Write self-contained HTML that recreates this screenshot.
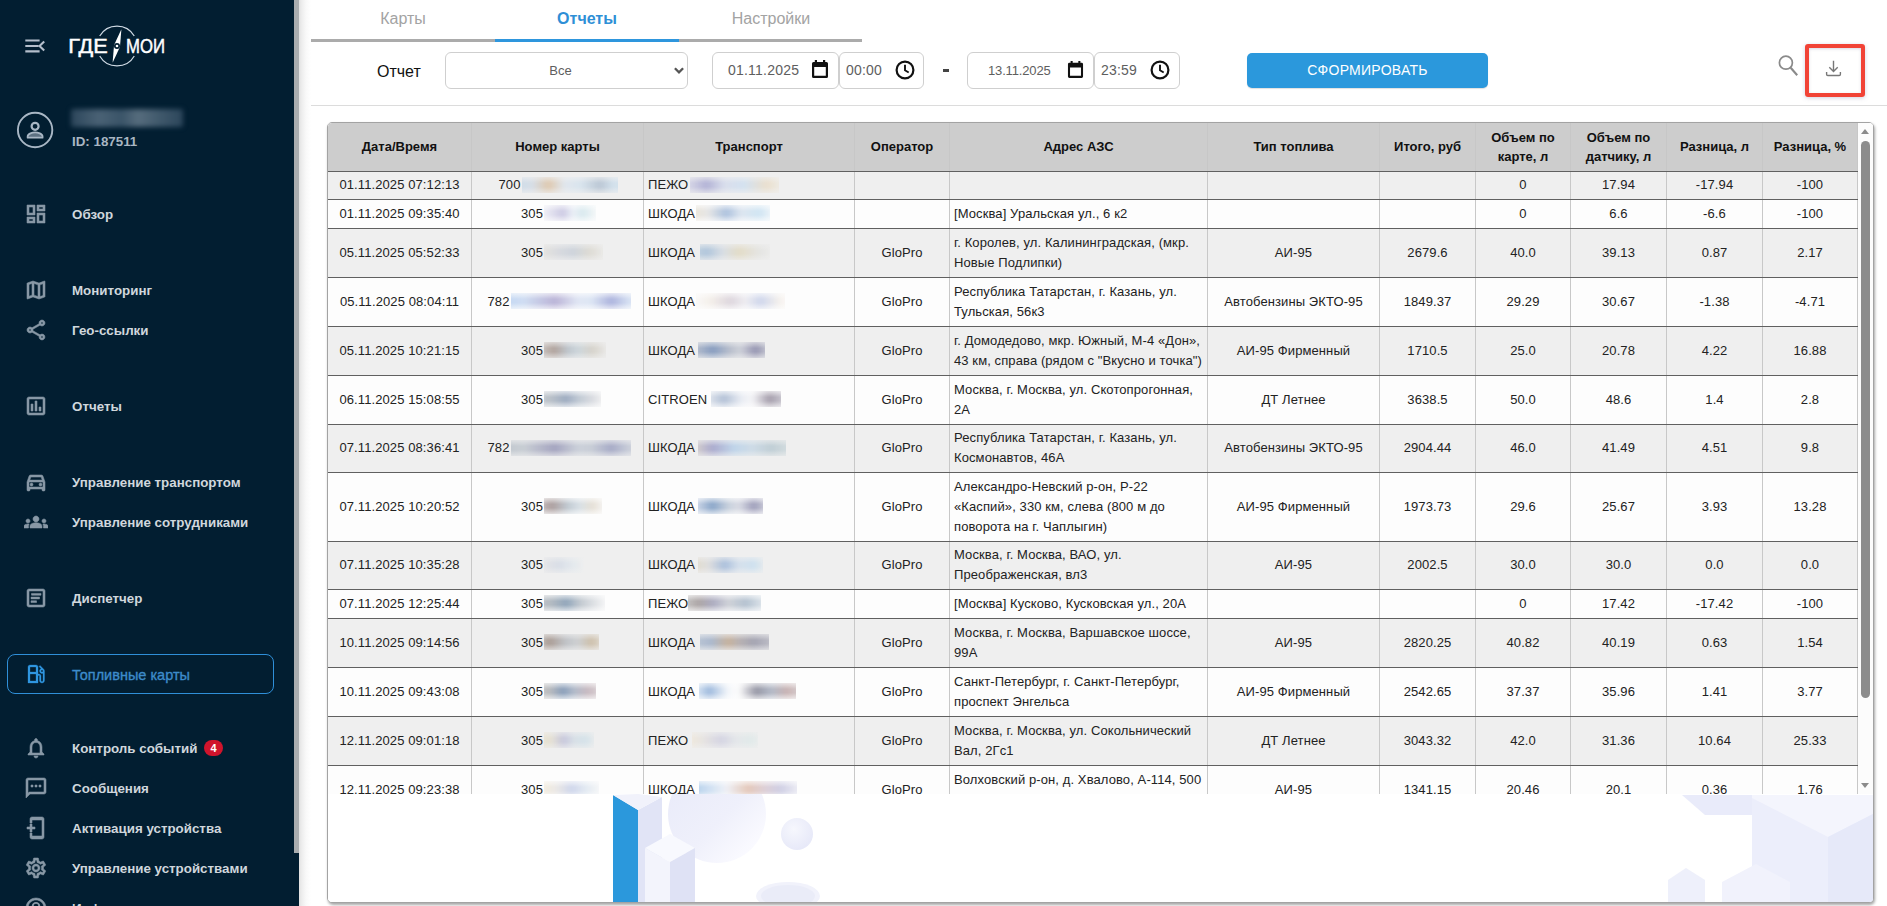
<!DOCTYPE html>
<html lang="ru"><head><meta charset="utf-8"><title>ГдеМои — Топливные карты — Отчеты</title>
<style>
*{box-sizing:border-box}
html,body{margin:0;padding:0}
body{width:1887px;height:906px;overflow:hidden;background:#fff;font-family:"Liberation Sans",sans-serif;position:relative}
/* ---------- sidebar ---------- */
.side{position:absolute;left:0;top:0;width:299px;height:906px;background:#021e31;overflow:hidden;z-index:5}
.sidescroll{position:absolute;left:294px;top:0;width:5px;height:853px;background:#aaadaf}
.sideshadow{position:absolute;left:299px;top:0;width:12px;height:906px;background:linear-gradient(90deg,#e2e2e2 0,#efefef 28%,#f9f9f9 60%,#fff 100%);z-index:1}
.side svg{position:absolute;display:block}
.ni{position:absolute;left:0;width:294px;height:40px}
.ni svg{left:24px;top:8px;width:24px;height:24px;fill:#8898a6;stroke:#8898a6;stroke-width:.55;stroke-linejoin:round}
.ni span{position:absolute;left:72px;top:.5px;line-height:40px;font-size:13.35px;font-weight:bold;color:#d0d7dd;white-space:nowrap;transform-origin:0 50%}
.ni.sel{left:7px;width:267px;height:40px;border:1px solid #2f8fd8;border-radius:8px}
.ni.sel svg{left:16px;top:7px;fill:#2f96e0;stroke:#2f96e0;stroke-width:.3}
.ni.sel span{left:64px;top:-.5px;color:#3d8bca;font-weight:normal;font-size:14.5px;-webkit-text-stroke:.35px #3d8bca}
.badge{position:absolute;left:204px;top:11.500px;width:19px;height:16px;border-radius:8px;background:#d0142c;color:#fff;font-size:11px;font-weight:bold;line-height:16px;text-align:center}
.uid{position:absolute;left:72px;top:134px;font-size:13.35px;font-weight:bold;color:#a9b6c2;line-height:16px;white-space:nowrap}
.uname{position:absolute;left:71px;top:109px;width:112px;height:18px;background:linear-gradient(90deg,#2c465b,#4a6275 25%,#3a5468 45%,#566c7d 60%,#3f586b 80%,#2c465b);filter:blur(2.5px);border-radius:2px}
/* ---------- main ---------- */
.main{position:absolute;left:299px;top:0;width:1588px;height:906px}
.tab{position:absolute;top:0;height:39px;width:184px;text-align:center;font-size:16px;line-height:37px;color:#a3a3a3}
.tab.act{color:#2e8fd6;font-weight:bold}
.tabline{position:absolute;left:12px;top:39px;width:551px;height:3px;background:#ababab}
.tabline i{position:absolute;left:184px;top:0;width:184px;height:3px;background:#2e96dd}
.lbl{position:absolute;left:78px;top:62px;font-size:16px;line-height:20px;color:#111}
.inp{position:absolute;top:52px;height:37px;border:1px solid #cfcfcf;border-radius:6px;background:#fff;color:#5e5e5e;font-size:14px;line-height:35px;white-space:nowrap;letter-spacing:.21px}
.inp svg{position:absolute;display:block}
.dash{position:absolute;left:644px;top:69px;width:6px;height:3px;background:#444}
.btn{position:absolute;left:948px;top:53px;width:241px;height:35px;border-radius:5px;background:#2b98dc;color:#fff;font-size:14px;line-height:35px;text-align:center;letter-spacing:.27px;box-shadow:0 1px 1px rgba(0,0,0,.13)}
.hr{position:absolute;left:12px;top:105px;width:1576px;height:1px;background:#dcdcdc}
.redbox{position:absolute;left:1506px;top:44px;width:60px;height:53px;border:4px solid #f14336;border-radius:3px;box-shadow:0 1px 4px rgba(120,120,160,.35),inset 0 1px 3px rgba(120,120,160,.3)}
.main>svg{position:absolute;display:block}
/* ---------- card & table ---------- */
.card{position:absolute;left:28px;top:122px;width:1547px;height:781px;border:1px solid #a3a3a3;border-radius:5px;background:#fff;box-shadow:1px 2px 3px rgba(0,0,0,.35);overflow:hidden}
.scroll{position:absolute;left:0;top:0;width:1545px;height:671px;overflow:hidden;background:#fff}
table.rep{border-collapse:separate;border-spacing:0;table-layout:fixed;width:1530px;font-size:13px;color:#222}
table.rep th{height:49px;background:#cdcdcd;color:#111;font-weight:bold;font-size:13px;line-height:19px;padding:0 7px 2px 6px;text-align:center;box-shadow:inset -1px 0 0 #c7c7c7;border-bottom:1px solid #606060;vertical-align:middle}
table.rep th.t2{padding-bottom:0}
table.rep td{padding:3px 5px 4px 4px;letter-spacing:.1px;line-height:20px;text-align:center;vertical-align:middle;box-shadow:inset -1px 0 0 #c8c8c8;border-bottom:1px solid #606060;white-space:nowrap;overflow:hidden}
table.rep td.l{text-align:left;padding-left:4px}
table.rep td.a{white-space:normal}
tr.o td{background:#efefef;--bg:239,239,239}
tr.e td{background:#fdfdfd;--bg:253,253,253}
.bl{display:inline-block;vertical-align:middle;position:relative;height:16px;top:-1px}
.bl b{position:absolute;top:0;display:block;overflow:hidden;border-radius:1px}
.bl b::after{content:"";position:absolute;left:0;top:0;right:0;bottom:0;background:linear-gradient(180deg,rgba(var(--bg),.6),rgba(var(--bg),0) 38%,rgba(var(--bg),0) 62%,rgba(var(--bg),.6))}
.bl i{display:block;width:100%;height:100%;filter:blur(2.5px);transform:scale(1.12,1.6);opacity:.86}
.sb{position:absolute;left:1530px;top:0;width:15px;height:671px;background:#fcfcfc}
.sbthumb{position:absolute;left:3px;top:18px;width:9px;height:557px;background:#8c8c8c;border-radius:5px}
.sbup{position:absolute;left:3px;top:6px;width:0;height:0;border:4.5px solid transparent;border-bottom:5px solid #8b8b8b;border-top:0}
.sbdn{position:absolute;left:3px;top:660px;width:0;height:0;border:4.5px solid transparent;border-top:5px solid #8b8b8b;border-bottom:0}
.deco{position:absolute;left:0;top:671px;width:1545px;height:108px;overflow:hidden;background:#fff}
.deco svg{position:absolute;left:0;top:0;display:block}

</style></head>
<body>
<div class="sideshadow"></div>
<div class="side">
<!-- menu toggle -->
<svg style="left:23px;top:34px;width:24px;height:24px" viewBox="0 0 24 24" fill="#b4becb"><path d="M2.300 5.500h14.300v2.100H2.300zM2.300 11h13.300v2.100H2.300zM2.300 16.300h14.300v2.100H2.300z"/><path d="M21.200 7.400 16.500 12l4.700 4.600" fill="none" stroke="#b4becb" stroke-width="2.100"/></svg>
<!-- logo -->
<svg style="left:62px;top:22px;width:110px;height:48px" viewBox="62 22 110 48">
<g fill="none" stroke="#cfd9e3" stroke-width="1.200">
<path d="M99.700 36A20 20 0 0 1 134.300 36"/><path d="M99.700 56A20 20 0 0 0 134.300 56"/>
</g>
<path d="M121.400 29.300 114.200 44.700 119.900 47.600z" fill="#fff"/><path d="M112.600 62.700 119.800 47.300 114.100 44.400z" fill="#fff"/>
<circle cx="117" cy="46" r="3" fill="#021e31"/><circle cx="117" cy="46" r="1.300" fill="#fff"/>
<text x="68.200" y="53.300" font-family="Liberation Sans, sans-serif" font-size="19.500" fill="#fff" stroke="#fff" stroke-width=".45" textLength="39.500" lengthAdjust="spacingAndGlyphs">ГДЕ</text>
<text x="126" y="53.300" font-family="Liberation Sans, sans-serif" font-size="19.500" fill="#fff" stroke="#fff" stroke-width=".45" textLength="39" lengthAdjust="spacingAndGlyphs">МОИ</text>
</svg>
<!-- user -->
<svg style="left:15px;top:110px;width:40px;height:40px" viewBox="15 110 40 40"><circle cx="35.100" cy="130" r="17.200" fill="none" stroke="#a9b7c5" stroke-width="1.900"/><circle cx="35.100" cy="126.300" r="3.500" fill="none" stroke="#a9b7c5" stroke-width="2.200"/><path d="M27.600 137.700v-1.100c0-2.900 5-4.300 7.500-4.300s7.500 1.400 7.500 4.300v1.100z" fill="#a9b7c5" fill-opacity=".55" stroke="#a9b7c5" stroke-width="1.700" stroke-linejoin="round"/></svg>
<div class="uname"></div>
<div class="uid">ID: 187511</div>

<div class="ni" style="top:194px"><svg viewBox="0 0 24 24"><path d="M19 5v2h-4V5h4M9 5v6H5V5h4m10 8v6h-4v-6h4M9 17v2H5v-2h4M21 3h-8v6h8V3zM11 3H3v10h8V3zm10 8h-8v10h8V11zm-10 4H3v6h8v-6z"/></svg><span>Обзор</span></div>
<div class="ni" style="top:270px"><svg viewBox="0 0 24 24"><path d="M20.500 3l-.16.03L15 5.100 9 3 3.360 4.900c-.21.07-.36.250-.36.480V20.500c0 .28.220.5.500.5l.16-.03L9 18.900l6 2.100 5.640-1.900c.21-.07.36-.25.36-.48V3.500c0-.28-.22-.5-.5-.5zM10 5.470l4 1.400v11.660l-4-1.400V5.470zm-5 .99l3-1.010v11.700l-3 1.160V6.460zm14 11.080l-3 1.010V6.860l3-1.160v11.840z"/></svg><span>Мониторинг</span></div>
<div class="ni" style="top:310px"><svg viewBox="0 0 24 24"><path d="M18 16.080c-.76 0-1.440.3-1.960.77L8.910 12.700c.05-.23.09-.46.09-.7s-.04-.47-.09-.7l7.050-4.110c.54.5 1.250.81 2.040.81 1.660 0 3-1.340 3-3s-1.340-3-3-3-3 1.340-3 3c0 .24.04.47.09.7L8.040 9.810C7.500 9.310 6.790 9 6 9c-1.660 0-3 1.340-3 3s1.340 3 3 3c.79 0 1.500-.31 2.040-.81l7.120 4.160c-.05.21-.08.43-.08.65 0 1.610 1.310 2.920 2.920 2.920s2.920-1.310 2.920-2.920c0-1.610-1.310-2.920-2.920-2.920zM18 4c.55 0 1 .45 1 1s-.45 1-1 1-1-.45-1-1 .45-1 1-1zM6 13c-.55 0-1-.45-1-1s.45-1 1-1 1 .45 1 1-.45 1-1 1zm12 7.020c-.55 0-1-.45-1-1s.45-1 1-1 1 .45 1 1-.45 1-1 1z"/></svg><span>Гео-ссылки</span></div>
<div class="ni" style="top:386px"><svg viewBox="0 0 24 24"><path d="M9 17H7v-7h2v7zm4 0h-2V7h2v10zm4 0h-2v-4h2v4zm2 2H5V5h14v14zm0-16H5c-1.100 0-2 .9-2 2v14c0 1.100.9 2 2 2h14c1.100 0 2-.9 2-2V5c0-1.100-.9-2-2-2z"/></svg><span>Отчеты</span></div>
<div class="ni" style="top:462px"><svg viewBox="0 0 24 24"><path d="M18.920 6.010C18.720 5.420 18.160 5 17.500 5h-11c-.66 0-1.210.42-1.420 1.010L3 12v8c0 .55.45 1 1 1h1c.55 0 1-.45 1-1v-1h12v1c0 .55.45 1 1 1h1c.55 0 1-.45 1-1v-8l-2.080-5.990zM6.850 7h10.290l1.080 3.110H5.770L6.850 7zM19 17H5v-5h14v5z"/><circle cx="7.500" cy="14.500" r="1.500"/><circle cx="16.500" cy="14.500" r="1.500"/></svg><span>Управление транспортом</span></div>
<div class="ni" style="top:502px"><svg viewBox="0 0 24 24"><path d="M12 12.750c1.630 0 3.070.39 4.240.9 1.080.48 1.760 1.560 1.760 2.730V18H6v-1.610c0-1.180.68-2.260 1.760-2.730 1.170-.52 2.610-.91 4.240-.91zM4 13c1.100 0 2-.9 2-2s-.9-2-2-2-2 .9-2 2 .9 2 2 2zm1.130 1.100c-.37-.06-.74-.1-1.130-.1-.99 0-1.930.21-2.780.58C.48 14.900 0 15.620 0 16.430V18h4.500v-1.610c0-.83.23-1.610.63-2.290zM20 13c1.100 0 2-.9 2-2s-.9-2-2-2-2 .9-2 2 .9 2 2 2zm4 3.430c0-.81-.48-1.530-1.220-1.850-.85-.37-1.790-.58-2.780-.58-.39 0-.76.04-1.130.1.400.68.630 1.460.630 2.290V18H24v-1.570zM12 6c1.660 0 3 1.340 3 3s-1.340 3-3 3-3-1.340-3-3 1.340-3 3-3z"/></svg><span>Управление сотрудниками</span></div>
<div class="ni" style="top:578px"><svg viewBox="0 0 24 24"><path d="M19 5v14H5V5h14m0-2H5c-1.100 0-2 .9-2 2v14c0 1.100.9 2 2 2h14c1.100 0 2-.9 2-2V5c0-1.100-.9-2-2-2z"/><path d="M7.500 7.400h9.500v1.800H7.500zM7 11.100h8.500v1.800H7zM7 14.800h5.500v1.800H7z"/></svg><span>Диспетчер</span></div>
<div class="ni sel" style="top:654px"><svg viewBox="0 0 24 24"><path d="M19.770 7.230l.01-.01-3.720-3.720L15 4.560l2.110 2.110c-.94.36-1.610 1.260-1.610 2.330 0 1.380 1.120 2.500 2.500 2.500.36 0 .69-.08 1-.21v7.210c0 .55-.45 1-1 1s-1-.45-1-1V14c0-1.100-.9-2-2-2h-1V5c0-1.100-.9-2-2-2H6c-1.100 0-2 .9-2 2v16h10v-7.500h1.500v5c0 1.380 1.120 2.500 2.500 2.500s2.500-1.120 2.500-2.500V9c0-.69-.28-1.320-.73-1.770zM12 13.500V19H6v-7h6v1.500zm0-3.500H6V5h6v5zm6 0c-.55 0-1-.45-1-1s.45-1 1-1 1 .45 1 1-.45 1-1 1z"/></svg><span>Топливные карты</span></div>
<div class="ni" style="top:728px"><svg viewBox="0 0 24 24"><path d="M12 22c1.100 0 2-.9 2-2h-4c0 1.100.9 2 2 2zm6-6v-5c0-3.070-1.630-5.640-4.500-6.320V4c0-.83-.67-1.500-1.500-1.500s-1.500.67-1.500 1.500v.68C7.640 5.360 6 7.920 6 11v5l-2 2v1h16v-1l-2-2zm-2 1H8v-6c0-2.480 1.510-4.500 4-4.500s4 2.020 4 4.500v6z"/></svg><span>Контроль событий</span><div class="badge">4</div></div>
<div class="ni" style="top:768px"><svg viewBox="0 0 24 24"><path d="M20 2H4c-1.100 0-2 .9-2 2v18l4-4h14c1.100 0 2-.9 2-2V4c0-1.100-.9-2-2-2zm0 14H5.170L4 17.170V4h16v12zM7 9h2v2H7zm4 0h2v2h-2zm4 0h2v2h-2z"/></svg><span>Сообщения</span></div>
<div class="ni" style="top:808px"><svg viewBox="0 0 24 24"><path d="M8 1h10c1.100 0 2 .9 2 2v18c0 1.100-.9 2-2 2H8c-1.100 0-2-.9-2-2v-4h2v3h10V4H8v3H6V3c0-1.100.9-2 2-2z"/><path d="M6 8h2v3h3v2H8v3H6v-3H3v-2h3z"/></svg><span>Активация устройства</span></div>
<div class="ni" style="top:848px"><svg viewBox="0 0 24 24"><path d="M19.430 12.980c.04-.32.07-.64.07-.98 0-.34-.03-.66-.07-.98l2.110-1.650c.19-.15.24-.42.12-.64l-2-3.460c-.09-.16-.26-.25-.44-.25-.06 0-.12.01-.17.030l-2.490 1c-.52-.4-1.080-.73-1.690-.98l-.38-2.650C14.460 2.180 14.250 2 14 2h-4c-.25 0-.46.18-.49.42l-.38 2.650c-.61.25-1.170.59-1.690.98l-2.490-1c-.06-.02-.12-.03-.18-.03-.17 0-.34.09-.43.25l-2 3.460c-.13.220-.07.490.12.640l2.110 1.650c-.04.32-.07.65-.07.980 0 .33.030.66.070.98l-2.110 1.650c-.19.15-.24.42-.12.640l2 3.460c.09.160.26.250.44.250.06 0 .12-.01.17-.03l2.490-1c.52.4 1.080.73 1.690.98l.38 2.650c.03.240.24.420.49.420h4c.25 0 .46-.18.490-.42l.38-2.650c.61-.25 1.170-.59 1.690-.98l2.490 1c.06.020.12.030.18.030.17 0 .34-.09.430-.25l2-3.460c.12-.22.070-.49-.12-.64l-2.110-1.650zm-1.980-1.710c.04.310.05.520.05.730 0 .21-.02.430-.05.730l-.14 1.130.89.700 1.080.84-.7 1.210-1.270-.51-1.040-.42-.9.680c-.43.320-.84.560-1.250.730l-1.060.43-.16 1.130-.2 1.350h-1.400l-.19-1.350-.16-1.130-1.060-.43c-.43-.18-.83-.41-1.230-.71l-.91-.7-1.060.43-1.270.51-.7-1.210 1.080-.84.890-.7-.14-1.130c-.03-.31-.05-.54-.05-.740s.02-.43.050-.73l.14-1.130-.89-.7-1.080-.84.700-1.210 1.270.51 1.040.42.900-.68c.43-.32.840-.56 1.250-.73l1.060-.43.160-1.130.2-1.350h1.390l.19 1.350.16 1.130 1.060.43c.43.180.83.410 1.230.710l.91.700 1.060-.43 1.270-.51.700 1.210-1.070.85-.89.700.14 1.130zM12 8c-2.210 0-4 1.790-4 4s1.790 4 4 4 4-1.790 4-4-1.790-4-4-4zm0 6c-1.100 0-2-.9-2-2s.9-2 2-2 2 .9 2 2-.9 2-2 2z"/></svg><span>Управление устройствами</span></div>
<div class="ni" style="top:888px"><svg viewBox="0 0 24 24"><path d="M12 2C6.480 2 2 6.480 2 12s4.480 10 10 10 10-4.480 10-10S17.520 2 12 2zm0 18c-4.410 0-8-3.590-8-8s3.590-8 8-8 8 3.590 8 8-3.590 8-8 8z"/><circle cx="12" cy="10.200" r="3.300" fill="none" stroke-width="1.900"/></svg><span>Информация</span></div>
<div class="sidescroll"></div>
</div>

<div class="main">
<div class="tab" style="left:12px">Карты</div>
<div class="tab act" style="left:196px">Отчеты</div>
<div class="tab" style="left:380px">Настройки</div>
<div class="tabline"><i></i></div>

<div class="lbl">Отчет</div>
<div class="inp" style="left:146px;width:243px;text-align:center;padding-right:12px;font-size:13px;letter-spacing:0">Все
<svg style="left:227px;top:13px;width:12px;height:10px" viewBox="0 0 12 10"><path d="M1.900 2.300 6 6.400 10.100 2.300" fill="none" stroke="#555" stroke-width="2.300"/></svg></div>

<div class="inp" style="left:413px;width:127px;padding-left:15px">01.11.2025
<svg style="left:98px;top:6px;width:18px;height:21px" viewBox="0 0 18 21"><path d="M3.800 1h2.200v2h6V1h2.200v2h1.300A1.500 1.500 0 0 1 17 4.500v13a1.500 1.500 0 0 1-1.500 1.500h-13A1.500 1.500 0 0 1 1 17.500v-13A1.500 1.500 0 0 1 2.500 3h1.300zM3.200 8v8.800h11.600V8z" fill="#111"/></svg></div>
<div class="inp" style="left:540px;width:85px;padding-left:6px">00:00
<svg style="left:54px;top:6px;width:22px;height:22px" viewBox="0 0 22 22"><circle cx="11" cy="11" r="8.400" fill="none" stroke="#111" stroke-width="2.200"/><path d="M11 5.800v5.500l3.700 2.200" fill="none" stroke="#111" stroke-width="1.900"/></svg></div>
<div class="dash"></div>
<div class="inp" style="left:668px;width:127px;padding-left:20px;font-size:13px;letter-spacing:-.15px">13.11.2025
<svg style="left:99px;top:7px;width:17px;height:19.800px" viewBox="0 0 18 21"><path d="M3.800 1h2.200v2h6V1h2.200v2h1.300A1.500 1.500 0 0 1 17 4.500v13a1.500 1.500 0 0 1-1.500 1.500h-13A1.500 1.500 0 0 1 1 17.500v-13A1.500 1.500 0 0 1 2.500 3h1.300zM3.200 8v8.800h11.600V8z" fill="#111"/></svg></div>
<div class="inp" style="left:795px;width:86px;padding-left:6px">23:59
<svg style="left:54px;top:6px;width:22px;height:22px" viewBox="0 0 22 22"><circle cx="11" cy="11" r="8.400" fill="none" stroke="#111" stroke-width="2.200"/><path d="M11 5.800v5.500l3.700 2.200" fill="none" stroke="#111" stroke-width="1.900"/></svg></div>

<div class="btn">СФОРМИРОВАТЬ</div>

<svg style="left:1476px;top:52px;width:26px;height:28px" viewBox="1775 52 26 28"><circle cx="1785.900" cy="62.700" r="6.500" fill="none" stroke="#8a8a8a" stroke-width="1.700"/><path d="M1790.700 67.700 1797.200 75.200" stroke="#8a8a8a" stroke-width="2.100" fill="none"/></svg>
<svg style="left:1524px;top:58px;width:20px;height:20px" viewBox="1823 58 20 20"><path d="M1833.500 60.800v10.200M1829.300 67.300l4.200 4.100 4.200-4.100M1826.600 72v2.300a1.200 1.200 0 0 0 1.200 1.200h11.400a1.200 1.200 0 0 0 1.200-1.200V72" fill="none" stroke="#777" stroke-width="1.400"/></svg>
<div class="redbox"></div>
<div class="hr"></div>

<div class="card">
<div class="scroll">
<table class="rep"><col style="width:144px"><col style="width:172px"><col style="width:211px"><col style="width:95px"><col style="width:258px"><col style="width:172px"><col style="width:96px"><col style="width:95px"><col style="width:96px"><col style="width:96px"><col style="width:95px"><thead><tr><th>Дата/Время</th><th>Номер карты</th><th>Транспорт</th><th>Оператор</th><th>Адрес АЗС</th><th>Тип топлива</th><th>Итого, руб</th><th class="t2">Объем по карте, л</th><th class="t2">Объем по датчику, л</th><th>Разница, л</th><th>Разница, %</th></tr></thead><tbody>
<tr class="o" style="height:28px"><td>01.11.2025 07:12:13</td><td>700<span class="bl" style="width:96px"><b style="left:1px;width:96px;height:16px"><i style="background:linear-gradient(90deg,#c9d9e8, #d3dce6 15%, #dcc3a6 30%, #dfe6ee 45%, #d6e3ee 60%, #b3c1d0 78%, #cfdfec 90%, #d3e3ee)"></i></b></span></td><td class="l">ПЕЖО<span class="bl" style="width:89px"><b style="left:2px;width:89px;height:16px"><i style="background:linear-gradient(90deg,#dcdcea, #aaaad2 22%, #d6dcec 40%, #d0e0f0 60%, #e9ddc9 82%, #efeeea)"></i></b></span></td><td></td><td class="l a"></td><td></td><td></td><td>0</td><td>17.94</td><td>-17.94</td><td>-100</td></tr>
<tr class="e" style="height:29px"><td>01.11.2025 09:35:40</td><td>305<span class="bl" style="width:51px"><b style="left:1px;width:52px;height:16px"><i style="background:linear-gradient(90deg,#f3f3f8, #c6c3e0 38%, #e9eef6 55%, #d3e6ec 72%, #fafafa)"></i></b></span></td><td class="l">ШКОДА<span class="bl" style="width:74px"><b style="left:1px;width:74px;height:16px"><i style="background:linear-gradient(90deg,#e9e1d1, #e3e3e3 20%, #a1b9d9 42%, #d9e3ee 60%, #c9e1f1 82%, #f3f6f9)"></i></b></span></td><td></td><td class="l a">[Москва] Уральская ул., 6 к2</td><td></td><td></td><td>0</td><td>6.6</td><td>-6.6</td><td>-100</td></tr>
<tr class="o" style="height:49px"><td>05.11.2025 05:52:33</td><td>305<span class="bl" style="width:51px"><b style="left:1px;width:59px;height:16px"><i style="background:linear-gradient(90deg,#e6e3dc, #d3d6dc 30%, #c9d0d9 50%, #dcd9d0 75%, #ececec)"></i></b></span></td><td class="l">ШКОДА<span class="bl" style="width:70px"><b style="left:5px;width:70px;height:16px"><i style="background:linear-gradient(90deg,#b6cadc, #a9c1d9 15%, #d6dce3 35%, #e1d9c1 55%, #e3e3e0 80%, #ececec)"></i></b></span></td><td>GloPro</td><td class="l a">г. Королев, ул. Калининградская, (мкр. Новые Подлипки)</td><td>АИ-95</td><td>2679.6</td><td>40.0</td><td>39.13</td><td>0.87</td><td>2.17</td></tr>
<tr class="e" style="height:49px"><td>05.11.2025 08:04:11</td><td>782<span class="bl" style="width:118px"><b style="left:1px;width:120px;height:16px"><i style="background:linear-gradient(90deg,#b9d1f1, #c9d9f1 15%, #b1a9d1 38%, #dce3f3 55%, #d9e3f3 65%, #a1a9d9 80%, #d0dcf1 93%, #e3ecf8)"></i></b></span></td><td class="l">ШКОДА<span class="bl" style="width:89px"><b style="left:1px;width:89px;height:16px"><i style="background:linear-gradient(90deg,#fbfbfb, #f3eee8 20%, #d9d1d9 40%, #ecebf0 55%, #c9d1e9 70%, #f6f1ec 90%, #fcfcfc)"></i></b></span></td><td>GloPro</td><td class="l a">Республика Татарстан, г. Казань, ул. Тульская, 56к3</td><td>Автобензины ЭКТО-95</td><td>1849.37</td><td>29.29</td><td>30.67</td><td>-1.38</td><td>-4.71</td></tr>
<tr class="o" style="height:49px"><td>05.11.2025 10:21:15</td><td>305<span class="bl" style="width:51px"><b style="left:1px;width:62px;height:16px"><i style="background:linear-gradient(90deg,#c3bcb9, #a99991 20%, #b9c1c9 40%, #c9d3d9 55%, #d3cfc6 75%, #ececec)"></i></b></span></td><td class="l">ШКОДА<span class="bl" style="width:67px"><b style="left:3px;width:67px;height:16px"><i style="background:linear-gradient(90deg,#b1b9c9, #7991b9 25%, #b6bcc9 50%, #c9ccd6 62%, #8989a9 82%, #c3c6d0)"></i></b></span></td><td>GloPro</td><td class="l a">г. Домодедово, мкр. Южный, М-4 «Дон», 43 км, справа (рядом с "Вкусно и точка")</td><td>АИ-95 Фирменный</td><td>1710.5</td><td>25.0</td><td>20.78</td><td>4.22</td><td>16.88</td></tr>
<tr class="e" style="height:49px"><td>06.11.2025 15:08:55</td><td>305<span class="bl" style="width:51px"><b style="left:1px;width:57px;height:16px"><i style="background:linear-gradient(90deg,#b9bfc6, #b1b9c1 15%, #91a1b9 40%, #b9c3cf 60%, #d3d6dc 80%, #f3f3f3)"></i></b></span></td><td class="l">CITROEN<span class="bl" style="width:70px"><b style="left:4px;width:70px;height:16px"><i style="background:linear-gradient(90deg,#e1e5ed, #a9b9d1 22%, #e9ecf3 45%, #f3f3f6 58%, #9991a1 80%, #c9c6d0)"></i></b></span></td><td>GloPro</td><td class="l a">Москва, г. Москва, ул. Скотопрогонная, 2А</td><td>ДТ Летнее</td><td>3638.5</td><td>50.0</td><td>48.6</td><td>1.4</td><td>2.8</td></tr>
<tr class="o" style="height:48px"><td>07.11.2025 08:36:41</td><td>782<span class="bl" style="width:118px"><b style="left:1px;width:120px;height:16px"><i style="background:linear-gradient(90deg,#b9c1c9, #c3c9d0 15%, #9999b9 38%, #c6ccd6 55%, #c3c9d3 65%, #9ca1c1 80%, #c3c9d6 93%, #d3d6dc)"></i></b></span></td><td class="l">ШКОДА<span class="bl" style="width:88px"><b style="left:3px;width:88px;height:16px"><i style="background:linear-gradient(90deg,#d9d1c9, #a1a1c9 20%, #b9d1e9 42%, #c9d9e6 60%, #b9c9d1 80%, #d3dcdf)"></i></b></span></td><td>GloPro</td><td class="l a">Республика Татарстан, г. Казань, ул. Космонавтов, 46А</td><td>Автобензины ЭКТО-95</td><td>2904.44</td><td>46.0</td><td>41.49</td><td>4.51</td><td>9.8</td></tr>
<tr class="e" style="height:69px"><td>07.11.2025 10:20:52</td><td>305<span class="bl" style="width:51px"><b style="left:1px;width:58px;height:16px"><i style="background:linear-gradient(90deg,#b9b1b1, #a19191 18%, #b9c3cc 42%, #d3dce3 60%, #e3dcd0 80%, #f6f6f6)"></i></b></span></td><td class="l">ШКОДА<span class="bl" style="width:65px"><b style="left:3px;width:65px;height:16px"><i style="background:linear-gradient(90deg,#d1d9e9, #7999c1 25%, #c3ccd9 48%, #d3d6e0 62%, #9191b1 82%, #c9cad6)"></i></b></span></td><td>GloPro</td><td class="l a">Александро-Невский р-он, Р-22 «Каспий», 330 км, слева (800 м до поворота на г. Чаплыгин)</td><td>АИ-95 Фирменный</td><td>1973.73</td><td>29.6</td><td>25.67</td><td>3.93</td><td>13.28</td></tr>
<tr class="o" style="height:48px"><td>07.11.2025 10:35:28</td><td>305<span class="bl" style="width:51px"><b style="left:1px;width:40px;height:16px"><i style="background:linear-gradient(90deg,#e3e3e6, #d6dce6 40%, #e3e9ee 70%, #efefef)"></i></b></span></td><td class="l">ШКОДА<span class="bl" style="width:65px"><b style="left:3px;width:65px;height:16px"><i style="background:linear-gradient(90deg,#e1d9c9, #dcdcdc 20%, #a1b9d9 42%, #d3dfec 62%, #c9dfef 82%, #ececec)"></i></b></span></td><td>GloPro</td><td class="l a">Москва, г. Москва, ВАО, ул. Преображенская, вл3</td><td>АИ-95</td><td>2002.5</td><td>30.0</td><td>30.0</td><td>0.0</td><td>0.0</td></tr>
<tr class="e" style="height:29px"><td>07.11.2025 12:25:44</td><td>305<span class="bl" style="width:51px"><b style="left:1px;width:61px;height:16px"><i style="background:linear-gradient(90deg,#b1b6bc, #a9b1b9 15%, #8199b1 38%, #b9c1c9 58%, #dcdfe3 80%, #fafafa)"></i></b></span></td><td class="l">ПЕЖО<span class="bl" style="width:73px"><b style="left:0px;width:73px;height:16px"><i style="background:linear-gradient(90deg,#c1c1c1, #a19999 18%, #a1a1b9 36%, #c9ccd3 55%, #a9b9c9 76%, #dfe6ec)"></i></b></span></td><td></td><td class="l a">[Москва] Кусково, Кусковская ул., 20А</td><td></td><td></td><td>0</td><td>17.42</td><td>-17.42</td><td>-100</td></tr>
<tr class="o" style="height:49px"><td>10.11.2025 09:14:56</td><td>305<span class="bl" style="width:51px"><b style="left:1px;width:55px;height:16px"><i style="background:linear-gradient(90deg,#b3aca6, #a19189 15%, #b9bcc1 40%, #c9cccf 60%, #c9b9a1 82%, #dcd6cc)"></i></b></span></td><td class="l">ШКОДА<span class="bl" style="width:69px"><b style="left:5px;width:69px;height:16px"><i style="background:linear-gradient(90deg,#b3bfd0, #a1b1c9 20%, #c1a991 42%, #b1a9a9 55%, #9999a9 75%, #b9b9c3)"></i></b></span></td><td>GloPro</td><td class="l a">Москва, г. Москва, Варшавское шоссе, 99А</td><td>АИ-95</td><td>2820.25</td><td>40.82</td><td>40.19</td><td>0.63</td><td>1.54</td></tr>
<tr class="e" style="height:49px"><td>10.11.2025 09:43:08</td><td>305<span class="bl" style="width:51px"><b style="left:1px;width:52px;height:16px"><i style="background:linear-gradient(90deg,#b6b6b6, #b1b3b6 15%, #7991b1 38%, #a9b3c3 58%, #c1b1b9 80%, #d3c9cc)"></i></b></span></td><td class="l">ШКОДА<span class="bl" style="width:97px"><b style="left:4px;width:97px;height:16px"><i style="background:linear-gradient(90deg,#e9f1fa, #91b1d9 15%, #f3f6fa 32%, #fcfcfc 42%, #898999 58%, #a9b1c1 72%, #c1a9a9 86%, #d3c9cc)"></i></b></span></td><td>GloPro</td><td class="l a">Санкт-Петербург, г. Санкт-Петербург, проспект Энгельса</td><td>АИ-95 Фирменный</td><td>2542.65</td><td>37.37</td><td>35.96</td><td>1.41</td><td>3.77</td></tr>
<tr class="o" style="height:49px"><td>12.11.2025 09:01:18</td><td>305<span class="bl" style="width:51px"><b style="left:1px;width:50px;height:16px"><i style="background:linear-gradient(90deg,#e9e1c9, #e3dfd3 20%, #c1c1d9 40%, #d6dfe6 60%, #d1e1e9 80%, #ececec)"></i></b></span></td><td class="l">ПЕЖО<span class="bl" style="width:66px"><b style="left:4px;width:66px;height:16px"><i style="background:linear-gradient(90deg,#f1e9d9, #e6e3e0 20%, #d1d1e1 45%, #e3e6e9 65%, #dfe9e9 85%, #ececec)"></i></b></span></td><td>GloPro</td><td class="l a">Москва, г. Москва, ул. Сокольнический Вал, 2Гс1</td><td>ДТ Летнее</td><td>3043.32</td><td>42.0</td><td>31.36</td><td>10.64</td><td>25.33</td></tr>
<tr class="e" style="height:49px"><td>12.11.2025 09:23:38</td><td>305<span class="bl" style="width:51px"><b style="left:1px;width:55px;height:16px"><i style="background:linear-gradient(90deg,#f3ebd9, #e9e6e3 25%, #c9d1e9 50%, #e1e9f1 75%, #f8f8f8)"></i></b></span></td><td class="l">ШКОДА<span class="bl" style="width:98px"><b style="left:4px;width:98px;height:16px"><i style="background:linear-gradient(90deg,#a9c9e9, #c9dcf1 15%, #eceff6 30%, #e1c1b1 50%, #d9c9d1 65%, #c9c9e1 80%, #f3f3f8)"></i></b></span></td><td>GloPro</td><td class="l a">Волховский р-он, д. Хвалово, А-114, 500 м от поворота</td><td>АИ-95</td><td>1341.15</td><td>20.46</td><td>20.1</td><td>0.36</td><td>1.76</td></tr>
</tbody></table>
<div class="sb"><div class="sbup"></div><div class="sbthumb"></div><div class="sbdn"></div></div>
</div>
<div class="deco"><svg width="1545" height="108" viewBox="328 794 1545 108">
<defs>
<linearGradient id="g1" x1="0" y1="0" x2="1" y2="1"><stop offset="0" stop-color="#e8eaf9"/><stop offset=".55" stop-color="#eff0fb"/><stop offset=".85" stop-color="#fafaff"/><stop offset="1" stop-color="#fff"/></linearGradient>
<radialGradient id="g2" cx=".4" cy=".35" r=".7"><stop offset="0" stop-color="#f6f7fd"/><stop offset="1" stop-color="#e6e8f8"/></radialGradient>
</defs>
<circle cx="717" cy="814" r="49" fill="url(#g1)"/>
<circle cx="797" cy="834" r="16" fill="url(#g2)"/>
<ellipse cx="788" cy="896" rx="32" ry="14" fill="#f1f2fb"/>
<ellipse cx="788" cy="896" rx="27" ry="11" fill="#eaecf8"/>
<path d="M613 795 638 810V902H613z" fill="#2b98dc"/>
<path d="M638 810 662 797V902H638z" fill="#e1e4f6"/>
<path d="M613 795 638 794 662 797 638 810z" fill="#f1f2fb"/>
<path d="M645 848 670 834 695 848 670 862z" fill="#f8f9fe"/>
<path d="M645 848 670 862V902H645z" fill="#f3f4fc"/>
<path d="M670 862 695 848V902H670z" fill="#dfe2f5"/>
<path d="M1682 795H1752V815H1705z" fill="#e9ebfa"/>
<path d="M1752 795H1873V902H1752z" fill="#eceefb"/>
<path d="M1752 795H1873V814L1828 837 1752 798z" fill="#f4f5fd"/>
<path d="M1828 837 1873 814V902H1828z" fill="#e6e9f9"/>
<path d="M1668 880 1686 868 1705 880V902H1668z" fill="#eef0fb"/>
<path d="M1722 882 1756 864 1790 882V902H1722z" fill="#f1f2fc"/>
</svg></div>

</div>
</div>
</body></html>
